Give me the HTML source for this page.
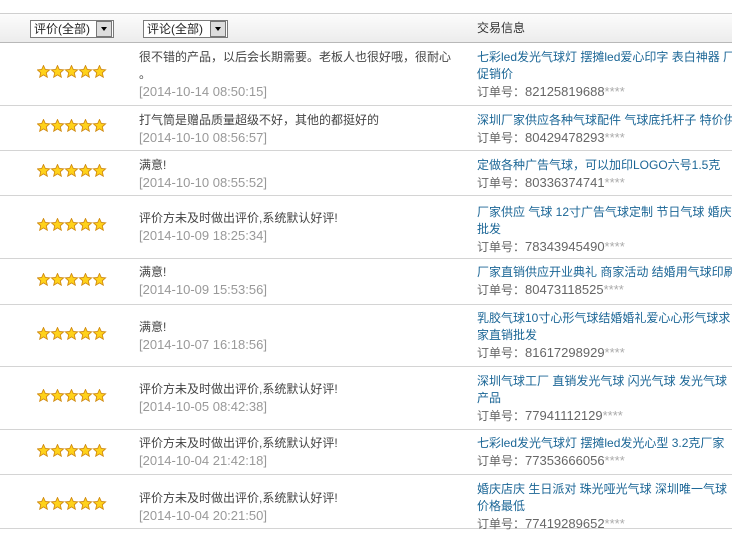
<!DOCTYPE html>
<html><head><meta charset="utf-8"><style>
*{margin:0;padding:0;box-sizing:border-box}
body{width:732px;height:530px;overflow:hidden;background:#fff;position:relative;font-family:"Liberation Sans","Noto Sans CJK SC",sans-serif;font-size:12px;color:#444}
.hd{position:absolute;left:0;top:13px;width:732px;height:30px;background:linear-gradient(#fcfcfc,#ececec);border-top:1px solid #cfcfcf;border-bottom:1px solid #b8b8b8}
.sel{position:absolute;top:6px;height:18px;border:1px solid #7a7a7a;background:#fff;line-height:16px;padding-left:3px;font-size:12px;color:#222}
.sel i{position:absolute;right:1px;top:0px;width:16px;height:16px;background:#ddd;border:1px solid #777}
.sel i:after{content:"";position:absolute;left:4px;top:5px;border:3.5px solid transparent;border-top:4px solid #000}
.sep{position:absolute;left:0;width:732px;height:1px;background:#d4d4d4}
.t{position:absolute;line-height:17px;white-space:nowrap}
.c{left:139px;color:#444}
.d{color:#999;font-size:13px}
.i{left:477px}
.a{color:#1b6696}
.o{color:#666}.o b{font-weight:normal;font-size:13px}.o span{color:#aaa;font-size:13px}
.st{position:absolute;left:37px;width:70px;height:13px}
</style></head><body>
<svg width="0" height="0" style="position:absolute"><defs><g id="s"><polygon points="6.5,0.5 8.3,4.5 12.6,4.9 9.3,7.8 10.3,12.2 6.5,9.9 2.7,12.2 3.7,7.8 0.4,4.9 4.7,4.5" fill="#ffd21a" stroke="#d08a10" stroke-width="0.9"/></g></defs></svg>
<div class="hd">
<div class="sel" style="left:30px;width:84px">评价(全部)<i></i></div>
<div class="sel" style="left:143px;width:85px">评论(全部)<i></i></div>
<div class="t" style="left:477px;top:6px;color:#333">交易信息</div>
</div>

<div class="sep" style="top:105px"></div><div class="sep" style="top:150px"></div><div class="sep" style="top:195px"></div><div class="sep" style="top:258px"></div><div class="sep" style="top:304px"></div><div class="sep" style="top:366px"></div><div class="sep" style="top:429px"></div><div class="sep" style="top:474px"></div><div class="sep" style="top:528px"></div>

<svg class="st" style="top:65px"><use href="#s"/><use href="#s" x="14"/><use href="#s" x="28"/><use href="#s" x="42"/><use href="#s" x="56"/></svg>
<svg class="st" style="top:119px"><use href="#s"/><use href="#s" x="14"/><use href="#s" x="28"/><use href="#s" x="42"/><use href="#s" x="56"/></svg>
<svg class="st" style="top:164px"><use href="#s"/><use href="#s" x="14"/><use href="#s" x="28"/><use href="#s" x="42"/><use href="#s" x="56"/></svg>
<svg class="st" style="top:218px"><use href="#s"/><use href="#s" x="14"/><use href="#s" x="28"/><use href="#s" x="42"/><use href="#s" x="56"/></svg>
<svg class="st" style="top:273px"><use href="#s"/><use href="#s" x="14"/><use href="#s" x="28"/><use href="#s" x="42"/><use href="#s" x="56"/></svg>
<svg class="st" style="top:327px"><use href="#s"/><use href="#s" x="14"/><use href="#s" x="28"/><use href="#s" x="42"/><use href="#s" x="56"/></svg>
<svg class="st" style="top:389px"><use href="#s"/><use href="#s" x="14"/><use href="#s" x="28"/><use href="#s" x="42"/><use href="#s" x="56"/></svg>
<svg class="st" style="top:444px"><use href="#s"/><use href="#s" x="14"/><use href="#s" x="28"/><use href="#s" x="42"/><use href="#s" x="56"/></svg>
<svg class="st" style="top:497px"><use href="#s"/><use href="#s" x="14"/><use href="#s" x="28"/><use href="#s" x="42"/><use href="#s" x="56"/></svg>

<div class="t c" style="top:49px">很不错的产品，以后会长期需要。老板人也很好哦，很耐心<br>。<br><span class="d">[2014-10-14 08:50:15]</span></div>
<div class="t i" style="top:49px"><span class="a">七彩led发光气球灯 摆摊led爱心印字 表白神器 厂<br>促销价</span><br><span class="o">订单号：<b>82125819688</b><span>****</span></span></div>

<div class="t c" style="top:112px">打气筒是赠品质量超级不好，其他的都挺好的<br><span class="d">[2014-10-10 08:56:57]</span></div>
<div class="t i" style="top:112px"><span class="a">深圳厂家供应各种气球配件 气球底托杆子 特价供</span><br><span class="o">订单号：<b>80429478293</b><span>****</span></span></div>

<div class="t c" style="top:157px">满意!<br><span class="d">[2014-10-10 08:55:52]</span></div>
<div class="t i" style="top:157px"><span class="a">定做各种广告气球，可以加印LOGO六号1.5克</span><br><span class="o">订单号：<b>80336374741</b><span>****</span></span></div>

<div class="t c" style="top:210px">评价方未及时做出评价,系统默认好评!<br><span class="d">[2014-10-09 18:25:34]</span></div>
<div class="t i" style="top:204px"><span class="a">厂家供应 气球 12寸广告气球定制 节日气球 婚庆<br>批发</span><br><span class="o">订单号：<b>78343945490</b><span>****</span></span></div>

<div class="t c" style="top:264px">满意!<br><span class="d">[2014-10-09 15:53:56]</span></div>
<div class="t i" style="top:264px"><span class="a">厂家直销供应开业典礼 商家活动 结婚用气球印刷</span><br><span class="o">订单号：<b>80473118525</b><span>****</span></span></div>

<div class="t c" style="top:319px">满意!<br><span class="d">[2014-10-07 16:18:56]</span></div>
<div class="t i" style="top:310px"><span class="a">乳胶气球10寸心形气球结婚婚礼爱心心形气球求<br>家直销批发</span><br><span class="o">订单号：<b>81617298929</b><span>****</span></span></div>

<div class="t c" style="top:381px">评价方未及时做出评价,系统默认好评!<br><span class="d">[2014-10-05 08:42:38]</span></div>
<div class="t i" style="top:373px"><span class="a">深圳气球工厂 直销发光气球 闪光气球 发光气球<br>产品</span><br><span class="o">订单号：<b>77941112129</b><span>****</span></span></div>

<div class="t c" style="top:435px">评价方未及时做出评价,系统默认好评!<br><span class="d">[2014-10-04 21:42:18]</span></div>
<div class="t i" style="top:435px"><span class="a">七彩led发光气球灯 摆摊led发光心型 3.2克厂家</span><br><span class="o">订单号：<b>77353666056</b><span>****</span></span></div>

<div class="t c" style="top:490px">评价方未及时做出评价,系统默认好评!<br><span class="d">[2014-10-04 20:21:50]</span></div>
<div class="t i" style="top:481px"><span class="a">婚庆店庆 生日派对 珠光哑光气球 深圳唯一气球<br>价格最低</span><br><span class="o">订单号：<b>77419289652</b><span>****</span></span></div>
</body></html>
